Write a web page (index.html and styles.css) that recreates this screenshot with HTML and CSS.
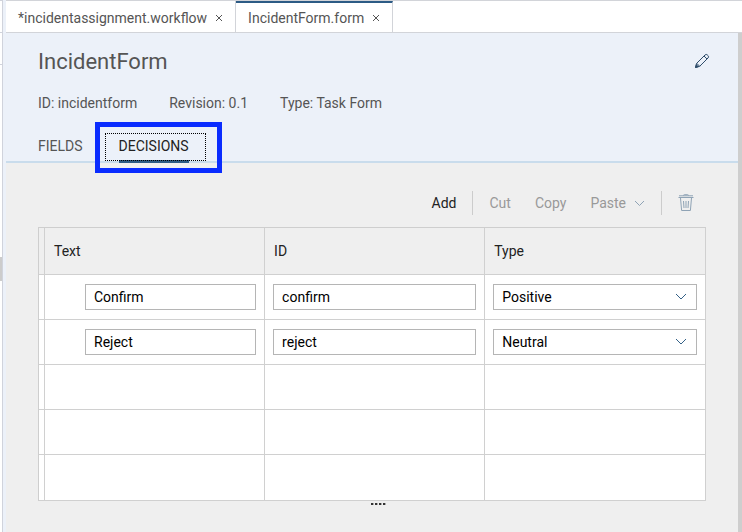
FILE: index.html
```html
<!DOCTYPE html>
<html lang="en">
<head>
<meta charset="utf-8">
<title>IncidentForm.form</title>
<link rel="stylesheet" href="styles.css">
</head>
<body>
<div class="app">
  <div class="rail">
    <div class="rail-top"></div>
    <div class="rail-sub"></div>
    <div class="rail-handle"></div>
  </div>
  <div class="workspace">
    <nav class="files" aria-label="Open files">
      <div class="file">
        <a href="#workflow">*incidentassignment.workflow</a>
        <button class="close" aria-label="Close workflow"><svg width="8" height="8" viewBox="0 0 8 8"><path d="M1 1l6 6M7 1L1 7"/></svg></button>
      </div>
      <div class="file file-active">
        <a href="#form">IncidentForm.form</a>
        <button class="close" aria-label="Close form"><svg width="8" height="8" viewBox="0 0 8 8"><path d="M1 1l6 6M7 1L1 7"/></svg></button>
      </div>
    </nav>
    <main class="editor">
      <header class="head">
        <div class="title-row">
          <h1>IncidentForm</h1>
          <button class="edit" aria-label="Edit"><svg width="16" height="16" viewBox="0 0 16 16"><path d="M1.500 14.500l1.200-4.200L11 2q1.200-1.200 2.400 0l.6.600q1.200 1.200 0 2.400L5.700 13.300zM10 3l3 3M2.700 10.300l3 3"/><path class="tip" d="M1.500 14.500l.8-2.800 2 2z"/></svg></button>
        </div>
        <div class="meta">
          <span>ID: incidentform</span>
          <span>Revision: 0.1</span>
          <span>Type: Task Form</span>
        </div>
        <div class="tabs" role="tablist">
          <button class="tab" role="tab" aria-selected="false">FIELDS</button>
          <button class="tab tab-active" role="tab" aria-selected="true"><span>DECISIONS</span></button>
        </div>
      </header>
      <section class="content">
        <div class="toolbar">
          <button class="add">Add</button>
          <i class="sep"></i>
          <button disabled>Cut</button>
          <button disabled>Copy</button>
          <button disabled class="paste">Paste <svg width="11" height="7" viewBox="0 0 11 7"><path d="M1 1l4.500 4.500L10 1"/></svg></button>
          <i class="sep"></i>
          <button disabled class="trash" aria-label="Delete"><svg width="16" height="18" viewBox="0 0 16 18"><path d="M.5 3.500h15M1 1.800h14M5.500 1.500q0-.8.8-.8h3.400q.8 0 .8.800M2.500 4l1.100 12.500h8.800L13.500 4M5.500 7l.5 7M8 7v7M10.500 7l-.5 7"/></svg></button>
        </div>
        <table>
          <colgroup><col class="c-mark"><col class="c-field"><col class="c-field"><col></colgroup>
          <thead>
            <tr><th></th><th scope="col">Text</th><th scope="col">ID</th><th scope="col">Type</th></tr>
          </thead>
          <tbody>
            <tr>
              <td></td>
              <td class="indent"><input type="text" aria-label="Text" value="Confirm"></td>
              <td><input type="text" aria-label="ID" value="confirm"></td>
              <td><div class="pick"><select aria-label="Type"><option>Positive</option><option>Neutral</option></select><svg width="12" height="8" viewBox="0 0 12 8"><path d="M1 1l5 5 5-5"/></svg></div></td>
            </tr>
            <tr>
              <td></td>
              <td class="indent"><input type="text" aria-label="Text" value="Reject"></td>
              <td><input type="text" aria-label="ID" value="reject"></td>
              <td><div class="pick"><select aria-label="Type"><option>Neutral</option><option>Positive</option></select><svg width="12" height="8" viewBox="0 0 12 8"><path d="M1 1l5 5 5-5"/></svg></div></td>
            </tr>
            <tr><td></td><td></td><td></td><td></td></tr>
            <tr><td></td><td></td><td></td><td></td></tr>
            <tr><td></td><td></td><td></td><td></td></tr>
          </tbody>
        </table>
        <div class="grip"><i></i><i></i><i></i><i></i></div>
      </section>
    </main>
  </div>
</div>
</body>
</html>
```
FILE: styles.css
```css
* { box-sizing: border-box; }

body {
  margin: 0;
  font: 14px/20px Roboto, "Liberation Sans", sans-serif;
  color: #555;
  background: #efefef;
}

button, input, select { font: inherit; color: inherit; }
button { padding: 0; border: 0; background: none; }
a { color: inherit; text-decoration: none; }
svg { display: block; fill: none; stroke: #346187; }

.app { display: flex; min-height: 100vh; }

.rail {
  flex: none;
  display: flex;
  flex-direction: column;
  width: 6px;
  background: linear-gradient(to right, #fff 2px, #d0d3dc 2px, #d0d3dc 3px, #ecf1f9 3px);
}
.rail-top { width: 2px; height: 33px; border: solid #d0d3dc; border-width: 1px 0; }
.rail-sub { width: 2px; height: 32px; border-bottom: 1px solid #d0d3dc; }
.rail-handle { width: 2px; height: 24px; margin-top: 192px; background: #ccc; }

.workspace { flex: 1; display: flex; flex-direction: column; min-width: 0; }

/* Open file tabs */
.files {
  display: flex;
  height: 33px;
  border: solid #d2d4d9;
  border-width: 1px 0;
  background: #fff;
}
.file {
  display: flex;
  align-items: center;
  gap: 8px;
  padding: 3px 12px 0;
  border-right: 1px solid #d2d4d9;
}
.file-active { padding-top: 1px; border-top: 2px solid #2c5b85; }
.close svg { stroke: #555; }

.editor {
  flex: 1;
  display: flex;
  flex-direction: column;
  border-right: 4px solid #cecece;
}

/* Form header */
.head {
  padding: 12px 28px 0 32px;
  border-bottom: 2px solid #c9dcec;
  background: #ecf1f9;
}
.title-row { display: flex; align-items: center; justify-content: space-between; height: 32px; }
h1 { margin: 0; padding-top: 2px; font-size: 22px; line-height: 32px; font-weight: 400; }
.edit svg { stroke: #2f4d6b; }
.edit .tip { fill: #2f4d6b; }
.meta { display: flex; gap: 32px; margin-top: 16px; }
.tabs { display: flex; gap: 36px; margin-top: 18px; }
.tab { height: 30px; }
.tab-active { position: relative; color: #222; }
.tab-active span {
  display: block;
  height: 32px;
  margin-bottom: -2px;
  padding-top: 5px;
  border-bottom: 3px solid #2c5b85;
}
.tab-active::before {
  content: "";
  position: absolute;
  inset: 2px -17px 0 -14px;
  border: 1px dotted #000;
}
.tab-active::after {
  content: "";
  position: absolute;
  inset: -9px -33px -12px -24px;
  border: 5px solid #0a2cff;
}

/* Toolbar */
.content { flex: 1; padding: 27px 32px 0; }
.toolbar {
  display: flex;
  align-items: center;
  justify-content: flex-end;
  height: 26px;
  padding-right: 12px;
}
.toolbar button { margin-right: 24px; color: #999; }
.toolbar .add { margin-right: 16px; color: #222; }
.toolbar .paste { display: flex; align-items: center; gap: 8px; margin-right: 16px; }
.toolbar .trash { margin-right: 0; }
.toolbar svg { stroke: #8fa3b5; }
.sep { width: 1px; height: 24px; margin-right: 16px; background: #ccc; }

/* Decisions table */
table {
  width: 100%;
  margin-top: 11px;
  table-layout: fixed;
  border-collapse: separate;
  border-spacing: 0;
  border: solid #cecece;
  border-width: 1px 0 0 1px;
  color: #222;
}
.c-mark { width: 6px; }
.c-field { width: 33%; }
th, td { height: 45px; padding: 0 8px; border: solid #d0d0d0; border-width: 0 1px 1px 0; }
th { height: 47px; padding: 0 9px; font-weight: 400; text-align: left; }
th:first-child, td:first-child { padding: 0; }
td { background: #fff; }
tr:last-child td { height: 46px; }
.indent { padding-left: 40px; }
input, select {
  display: block;
  width: 100%;
  height: 26px;
  margin: 0;
  padding: 0 8px;
  border: 1px solid #b5b5b5;
  border-radius: 0;
  background: #fff;
  color: #000;
}
select { appearance: none; }
.pick { display: grid; align-items: center; }
.pick > * { grid-area: 1 / 1; }
.pick svg { justify-self: end; margin-right: 10px; pointer-events: none; }

.grip { display: flex; justify-content: center; gap: 1px; margin-top: 2px; padding-left: 12px; }
.grip i { width: 3px; height: 2px; border-right: 1px solid #aaa; background: #333; }
```
